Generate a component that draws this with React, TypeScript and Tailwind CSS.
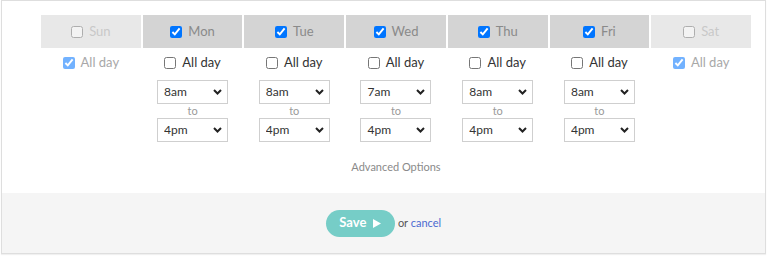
import React from "react";

type Day = {
  name: string;
  active: boolean;
  from?: string;
  to?: string;
};

const days: Day[] = [
  { name: "Sun", active: false },
  { name: "Mon", active: true, from: "8am", to: "4pm" },
  { name: "Tue", active: true, from: "8am", to: "4pm" },
  { name: "Wed", active: true, from: "7am", to: "4pm" },
  { name: "Thu", active: true, from: "8am", to: "4pm" },
  { name: "Fri", active: true, from: "8am", to: "4pm" },
  { name: "Sat", active: false },
];

const hours = ["6am", "7am", "8am", "9am", "10am", "11am", "12pm", "1pm", "2pm", "3pm", "4pm", "5pm", "6pm"];

function TimeSelect({ value }: { value: string }) {
  return (
    <div className="relative w-[71px] h-[24px]">
      <select
        defaultValue={value}
        className="appearance-none w-full h-full border border-[#cfcfcf] bg-white pl-[6px] text-[12px] text-[#333] outline-none"
      >
        {hours.map((h) => (
          <option key={h} value={h}>
            {h}
          </option>
        ))}
      </select>
      <svg
        className="absolute right-[6px] top-[9px] pointer-events-none"
        width="9"
        height="6"
        viewBox="0 0 9 6"
      >
        <path d="M1 1 L4.5 4.5 L8 1" fill="none" stroke="#222" strokeWidth="2" />
      </svg>
    </div>
  );
}

function DayColumn({ day }: { day: Day }) {
  return (
    <div className="flex flex-col items-center">
      <div
        className={
          day.active
            ? "w-full h-[33px] flex items-center justify-center gap-[6px] bg-[#d4d4d4] text-[#8a8a8a]"
            : "w-full h-[33px] flex items-center justify-center gap-[6px] bg-[#e8e8e8] text-[#c8c8c8]"
        }
      >
        <input
          type="checkbox"
          defaultChecked={day.active}
          className={day.active ? "w-[12px] h-[12px] m-0" : "w-[12px] h-[12px] m-0 opacity-50"}
        />
        <span>{day.name}</span>
      </div>
      <label
        className={
          day.active
            ? "mt-[7px] h-[16px] flex items-center gap-[6px] text-[#333]"
            : "mt-[7px] h-[16px] flex items-center gap-[6px] text-[#a8a8a8]"
        }
      >
        <input
          type="checkbox"
          defaultChecked={!day.active}
          className={day.active ? "w-[12px] h-[12px] m-0" : "w-[12px] h-[12px] m-0 opacity-55"}
        />
        <span>All day</span>
      </label>
      {day.active && (
        <div className="mt-[9px] flex flex-col items-center">
          <TimeSelect value={day.from!} />
          <div className="h-[14px] leading-[14px] text-[11px] text-[#9a9a9a]">to</div>
          <TimeSelect value={day.to!} />
        </div>
      )}
    </div>
  );
}

export default function App() {
  return (
    <div className="w-[768px] h-[257px] bg-white font-['Lato',sans-serif] text-[13px]">
      <div className="ml-[1px] w-[765px] border border-[#dedede] shadow-[0_1px_1px_rgba(0,0,0,0.06)]">
        <div className="pt-[14px] pl-[39px] pb-[19px]">
          <div className="grid grid-cols-7 gap-x-[2px] w-[710px] items-start">
            {days.map((d) => (
              <DayColumn key={d.name} day={d} />
            ))}
          </div>
          <div className="w-[710px] mt-[18px] h-[14px] leading-[14px] text-center text-[11px] text-[#8a8a8a]">
            Advanced Options
          </div>
        </div>
        <div className="h-[60px] bg-[#f5f5f5] flex items-center justify-center gap-[3px]">
          <button className="w-[69px] h-[27px] rounded-full bg-[#76cdc7] text-white text-[13px] font-bold flex items-center justify-center gap-[7px]">
            <span>Save</span>
            <svg width="8" height="9" viewBox="0 0 8 9">
              <path d="M0 0 L8 4.5 L0 9 Z" fill="#fff" />
            </svg>
          </button>
          <span className="text-[11px] text-[#555]">
            or <span className="text-[#4a6ad0]">cancel</span>
          </span>
        </div>
      </div>
    </div>
  );
}
